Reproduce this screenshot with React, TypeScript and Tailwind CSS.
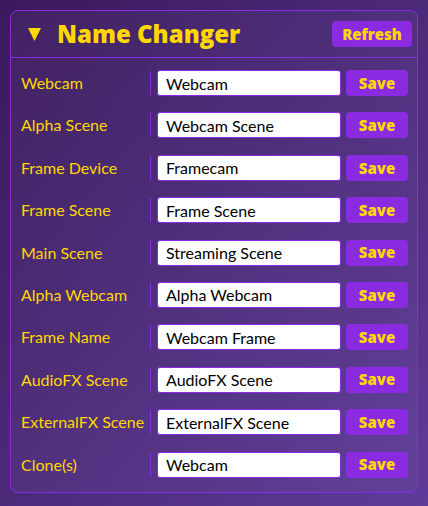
const rows = [
  { label: "Webcam", value: "Webcam" },
  { label: "Alpha Scene", value: "Webcam Scene" },
  { label: "Frame Device", value: "Framecam" },
  { label: "Frame Scene", value: "Frame Scene" },
  { label: "Main Scene", value: "Streaming Scene" },
  { label: "Alpha Webcam", value: "Alpha Webcam" },
  { label: "Frame Name", value: "Webcam Frame" },
  { label: "AudioFX Scene", value: "AudioFX Scene" },
  { label: "ExternalFX Scene", value: "ExternalFX Scene" },
  { label: "Clone(s)", value: "Webcam" },
]

export default function App() {
  return (
    <div className="w-[428px] h-[506px] bg-gradient-to-br from-[#3a1a5c] to-[#5e3b99] p-[10px] font-['Lato',sans-serif]">
      <div className="rounded-[8px] border border-[#8a2be2] bg-white/[0.03]">
        {/* Header */}
        <div className="flex items-center justify-between h-[47px] pl-[17px] pr-[5px] border-b border-[#8a2be2]">
          <div className="flex items-center gap-[16px]">
            <svg width="13" height="13" viewBox="0 0 13 13" className="mt-[1px]">
              <polygon points="0,0 13,0 6.5,13" fill="#ffd700" />
            </svg>
            <h1 className="text-[#ffd700] text-[24px] font-extrabold font-['Open_Sans',sans-serif] leading-none">
              Name Changer
            </h1>
          </div>
          <button className="h-[26px] w-[80px] rounded-[4px] bg-[#8a2be2] text-[#ffd700] text-[15px] font-extrabold font-['Open_Sans',sans-serif]">
            Refresh
          </button>
        </div>

        {/* Rows */}
        <div className="flex flex-col gap-[16.4px] pt-[12px] pb-[14px] pl-[10px] pr-[9px]">
          {rows.map((row) => (
            <div key={row.label} className="flex items-center h-[26px]">
              <label className="w-[129px] text-[#ffd700] text-[16px] whitespace-nowrap">{row.label}</label>
              <div className="h-[24px] border-l border-[#8a2be2] pl-[6px] flex items-center">
                <input
                  defaultValue={row.value}
                  className="w-[184px] h-[26px] rounded-[3px] bg-white border border-[#8a2be2] px-[8px] text-[16px] text-black outline-none"
                />
              </div>
              <button className="ml-[5px] w-[62px] h-[26px] rounded-[4px] bg-[#8a2be2] text-[#ffd700] text-[15px] font-extrabold font-['Open_Sans',sans-serif]">
                Save
              </button>
            </div>
          ))}
        </div>
      </div>
    </div>
  )
}
